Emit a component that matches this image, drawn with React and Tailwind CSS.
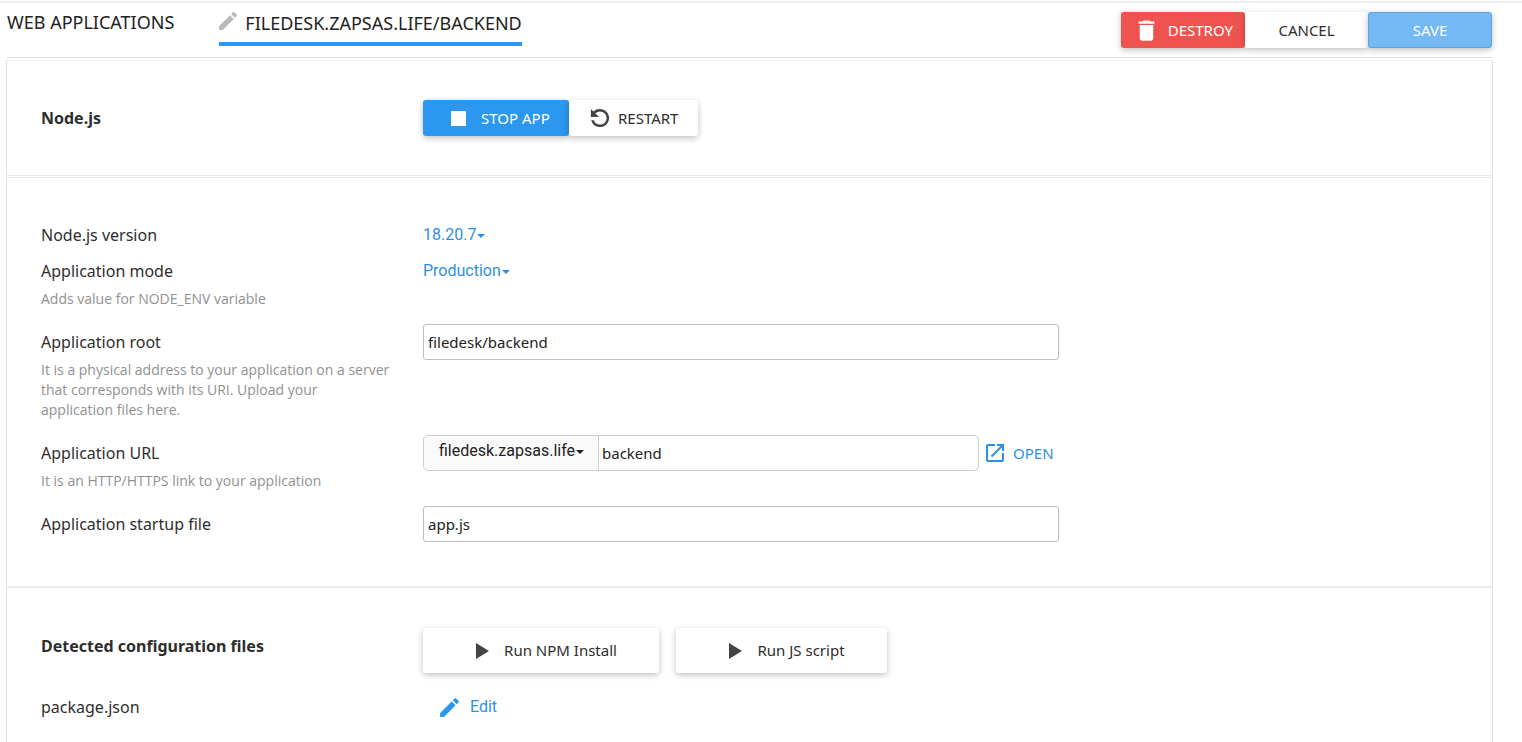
import React from "react";
import { MdDelete, MdModeEdit, MdOpenInNew } from "react-icons/md";

const raised = "shadow-[0_2px_6px_rgba(0,0,0,0.25)]";

function RestartIcon() {
  return (
    <svg viewBox="0 0 24 24" className="size-[26px] shrink-0 fill-[#444]" aria-hidden="true">
      <path d="M5.9 5.9A8.6 8.6 0 0 1 12 3.6c4.64 0 8.4 3.76 8.4 8.4s-3.76 8.4-8.4 8.4c-3.9 0-7.2-2.6-8.1-6.3h2.5A6 6 0 0 0 12 18.1c3.37 0 6.1-2.73 6.1-6.1S15.37 5.9 12 5.9c-1.7 0-3.2.7-4.3 1.8L11 11H3.6V3.6z" />
    </svg>
  );
}

function PlayIcon() {
  return (
    <svg viewBox="0 0 13 16" className="h-[16px] w-[13px] shrink-0 fill-[#444]" aria-hidden="true">
      <path d="M0 0l13 8-13 8z" />
    </svg>
  );
}

function InlineSelect({ id, label, options, className }) {
  return (
    <span className={`relative flex w-fit items-center ${className}`}>
      <select
        id={id}
        aria-label={label}
        className="h-full cursor-pointer appearance-none bg-transparent pr-[9px] font-[Roboto,sans-serif] text-base [field-sizing:content]"
      >
        {options.map((o) => (
          <option key={o}>{o}</option>
        ))}
      </select>
      <svg
        viewBox="0 0 8 4"
        className="pointer-events-none absolute right-0 mt-px h-[4px] w-[8px] fill-current"
        aria-hidden="true"
      >
        <path d="M0 0h8L4 4z" />
      </svg>
    </span>
  );
}

function Row({ id, label, hint, children }) {
  return (
    <div className="grid grid-cols-[382px_minmax(0,1fr)]">
      <div className="pr-8">
        <label htmlFor={id} className="block text-base leading-[36px]">
          {label}
        </label>
        {hint && (
          <p className="mb-[15px] font-['Open_Sans',sans-serif] text-sm leading-5 text-[#919191]">{hint}</p>
        )}
      </div>
      <div className="max-w-[636px]">{children}</div>
    </div>
  );
}

const input = "h-[36px] w-full border border-[#bdbdbd] bg-white px-1 text-[15px] text-[#222]";

export default function App() {
  return (
    <div className="flex min-h-screen flex-col border-t border-white bg-white font-['Noto_Sans',sans-serif] text-[#2e2e2e]">
      <div className="h-[2px] bg-[#eeefef]" />
      <header className="mr-[30px] ml-[7px] flex h-[55px] items-start justify-between border-b border-[#dcdcdc] pt-[9px]">
        <nav className="flex gap-[45px] text-lg text-[#222]">
          <a href="#applications" className="leading-[20px]">
            WEB APPLICATIONS
          </a>
          <a
            href="#backend"
            aria-current="page"
            className="flex h-[34px] gap-[8px] border-b-4 border-[#2b97ee] leading-[22px]"
          >
            <svg viewBox="3 3 18 18" className="size-[18px] fill-[#b6babd]" aria-hidden="true">
              <path d="M3 17.25V21h3.75L17.81 9.94l-3.75-3.75L3 17.25zM20.71 7.04a.996.996 0 0 0 0-1.41l-2.34-2.34a.996.996 0 0 0-1.41 0l-1.83 1.83 3.75 3.75 1.83-1.83z" />
            </svg>
            FILEDESK.ZAPSAS.LIFE/BACKEND
          </a>
        </nav>
        <div className="flex text-[15px]">
          <button
            className={`flex h-[36px] w-[124px] items-center justify-between rounded-[3px] bg-[#ef5350] px-3 text-white ${raised}`}
          >
            <MdDelete className="size-[27px]" aria-hidden="true" />
            DESTROY
          </button>
          <button className={`h-[36px] w-[123px] rounded-[3px] bg-white ${raised}`}>CANCEL</button>
          <button
            className={`h-[36px] w-[124px] rounded-[3px] border border-[#5fa3dc] bg-[#74b9f4] text-white ${raised}`}
          >
            SAVE
          </button>
        </div>
      </header>

      <main className="mt-[2px] mr-[29px] ml-[6px] flex-1 border border-b-0 border-[#e0e0e0] border-t-[#eeeeee]">
        <section className="grid grid-cols-[382px_minmax(0,1fr)] border-b-3 border-double border-[#e8e8e8] py-[39px] pl-[34px]">
          <h2 className="text-base leading-[36px] font-bold">Node.js</h2>
          <div className="flex text-[15px]">
            <button
              className={`flex h-[36px] w-[146px] items-center gap-[15px] rounded-[3px] bg-[#2b97ee] pl-[28px] text-white ${raised}`}
            >
              <span className="size-[15px] bg-white" />
              STOP APP
            </button>
            <button className={`flex h-[36px] w-[129px] items-center gap-[5px] rounded-[3px] bg-white pl-[18px] ${raised}`}>
              <RestartIcon />
              RESTART
            </button>
          </div>
        </section>

        <section className="border-b-2 border-[#ececec] pt-[39px] pb-[44px] pl-[34px]">
          <Row id="version" label="Node.js version">
            <InlineSelect id="version" options={["18.20.7"]} className="h-[36px] text-[#2e90e5]" />
          </Row>
          <Row id="mode" label="Application mode" hint="Adds value for NODE_ENV variable">
            <InlineSelect id="mode" options={["Production", "Development"]} className="h-[36px] text-[#2e90e5]" />
          </Row>
          <Row
            id="root-path"
            label="Application root"
            hint="It is a physical address to your application on a server that corresponds with its URI. Upload your application files here."
          >
            <input id="root-path" defaultValue="filedesk/backend" className={`rounded-[3px] ${input}`} />
          </Row>
          <Row id="url" label="Application URL" hint="It is an HTTP/HTTPS link to your application">
            <div className="flex items-center">
              <div className="flex h-[36px] w-[176px] shrink-0 items-start rounded-l-[5px] border border-[#cccccc] bg-[#fafafa] pl-[15px]">
                <InlineSelect label="Domain" options={["filedesk.zapsas.life"]} className="h-[30px] text-[#222]" />
              </div>
              <input
                id="url"
                defaultValue="backend"
                className="-ml-px h-[36px] min-w-0 flex-1 rounded-r-[5px] border border-[#cccccc] px-[3px] text-[15px] text-[#222]"
              />
              <a
                href="#open"
                className="flex w-[80px] shrink-0 items-center gap-[6px] pl-[4px] text-[15px] text-[#2e90e5]"
              >
                <MdOpenInNew className="size-[24px]" aria-hidden="true" />
                OPEN
              </a>
            </div>
          </Row>
          <Row id="startup" label="Application startup file">
            <input id="startup" defaultValue="app.js" className={`rounded-[3px] ${input}`} />
          </Row>
        </section>

        <section className="grid grid-cols-[382px_minmax(0,1fr)] gap-y-4 pt-[40px] pl-[34px] text-base">
          <h2 className="leading-[36px] font-bold">Detected configuration files</h2>
          <div className="flex gap-[17px] text-[15px]">
            <button className={`flex h-[45px] w-[236px] items-center justify-center gap-[15px] rounded-[3px] bg-white pl-[11px] ${raised}`}>
              <PlayIcon />
              Run NPM Install
            </button>
            <button className={`flex h-[45px] w-[211px] items-center justify-center gap-[15px] rounded-[3px] bg-white pl-[11px] ${raised}`}>
              <PlayIcon />
              Run JS script
            </button>
          </div>
          <p className="leading-[36px]">package.json</p>
          <div className="pl-[14px]">
            <button className="flex h-[36px] items-center gap-[8px] font-[Roboto,sans-serif] text-base text-[#2e90e5]">
              <MdModeEdit className="size-[25px] text-[#2b97ee]" aria-hidden="true" />
              Edit
            </button>
          </div>
        </section>
      </main>
    </div>
  );
}
